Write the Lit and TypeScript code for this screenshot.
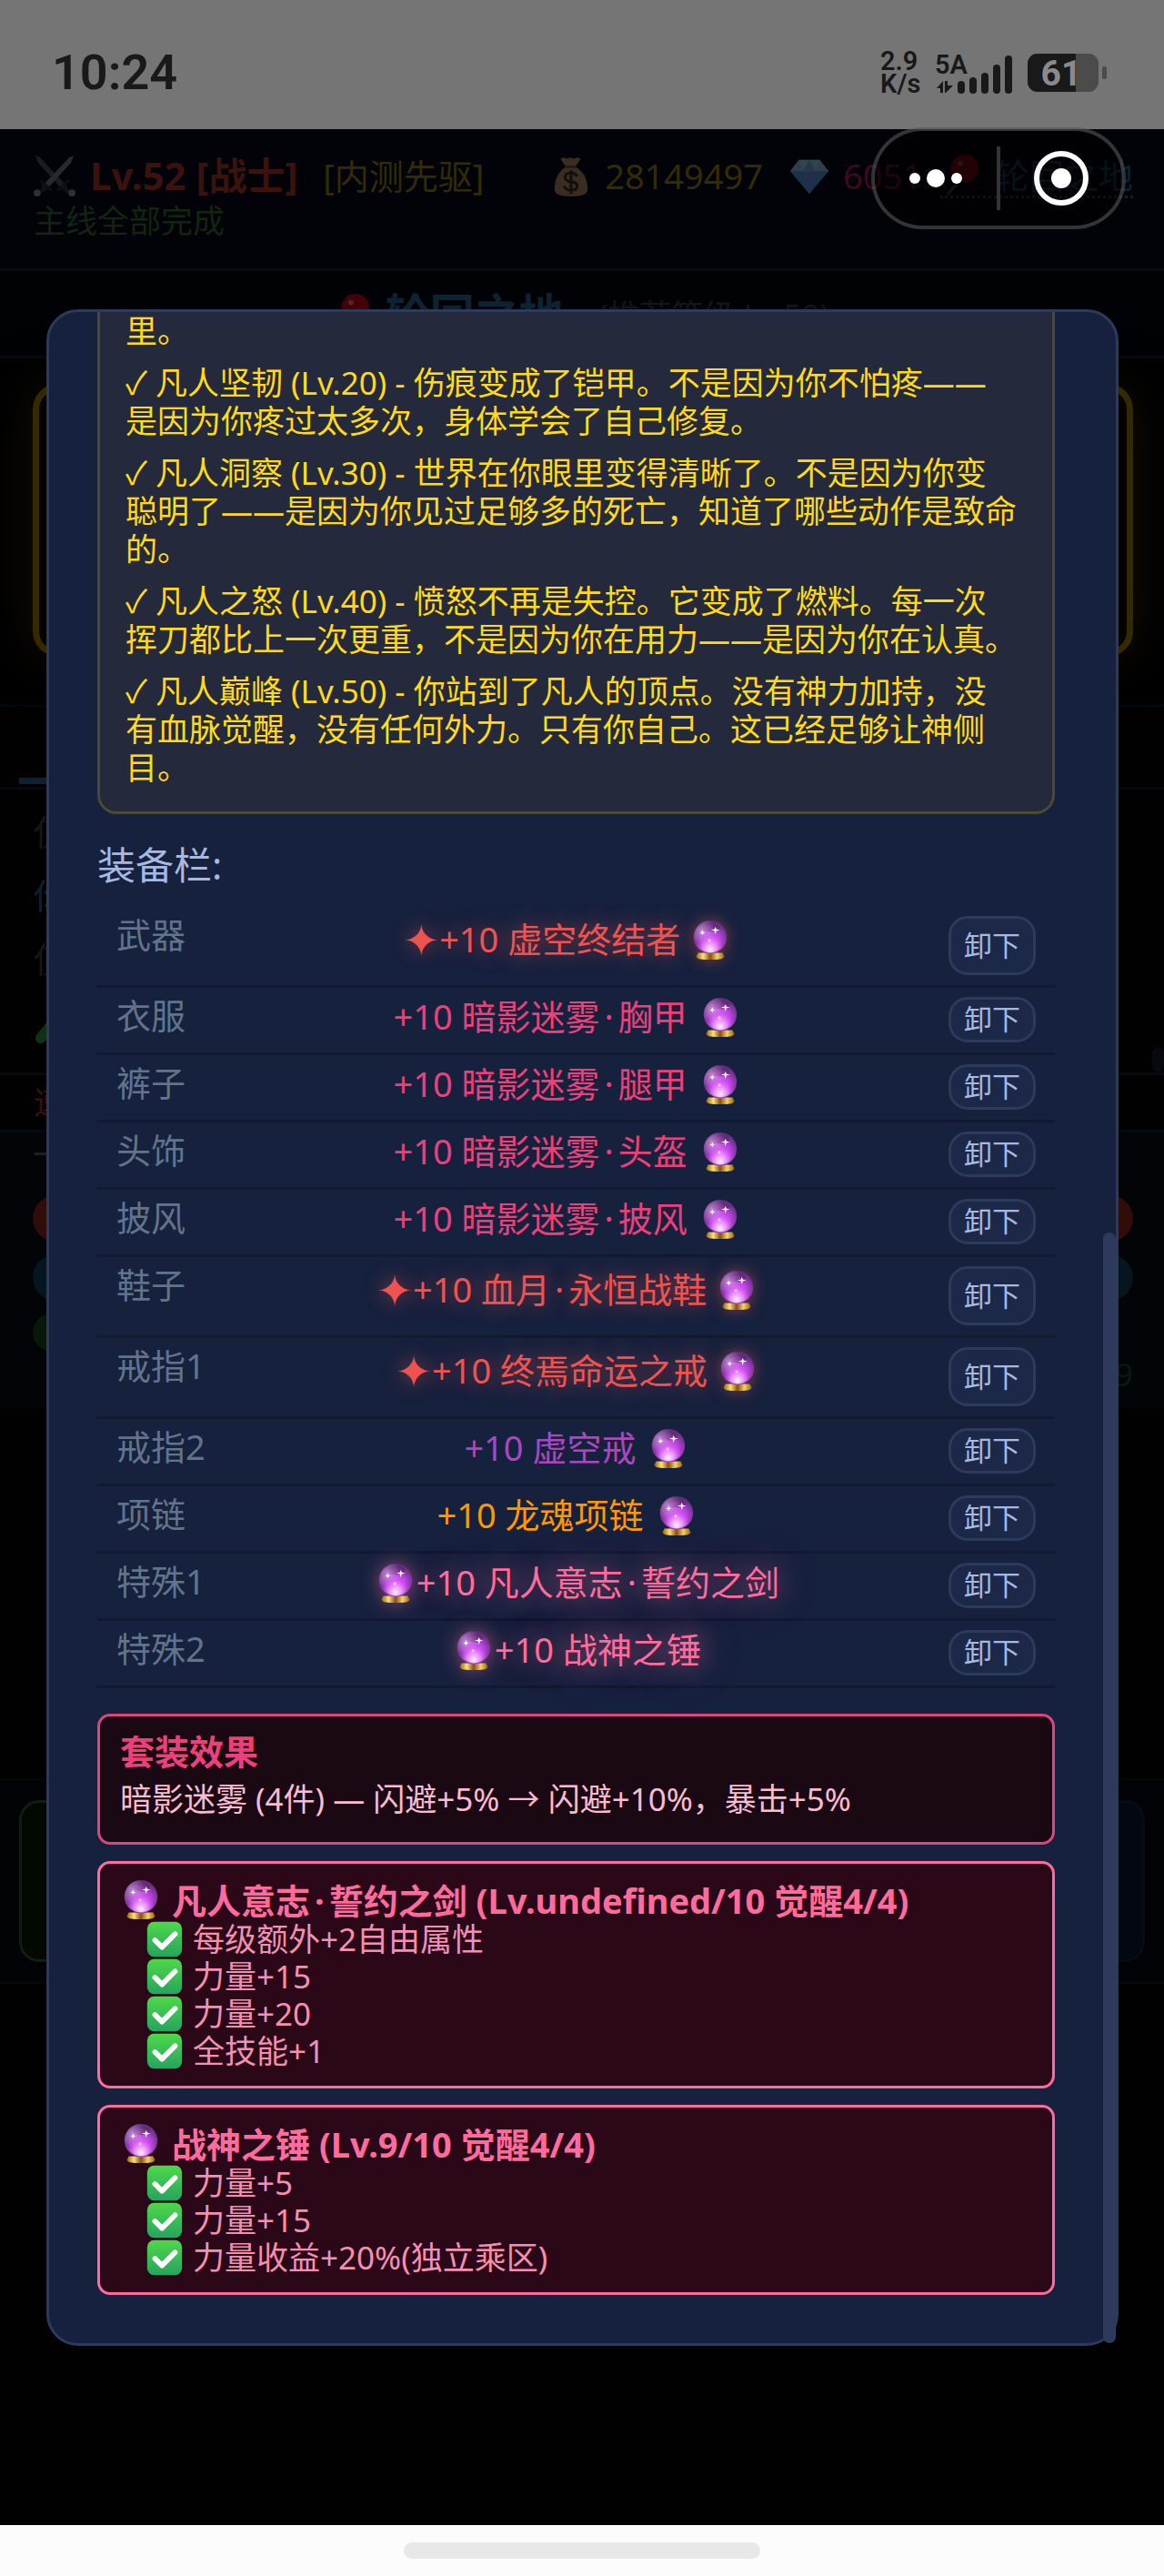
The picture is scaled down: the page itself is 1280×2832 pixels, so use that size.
import { LitElement, html, css, svg } from "lit";
import { customElement, property } from "lit/decorators.js";
import { classMap } from "lit/directives/class-map.js";

type IconName = "orb" | "check" | "swords" | "bag" | "gem" | "pin" | "tube";

const icons = {
  orb: svg`
    <defs>
      <radialGradient id="glass" cx="0.52" cy="0.62" r="0.6">
        <stop offset="0" stop-color="#e65cff"/>
        <stop offset="0.45" stop-color="#c045e6"/>
        <stop offset="0.8" stop-color="#7b3598"/>
        <stop offset="1" stop-color="#5b2a78"/>
      </radialGradient>
      <radialGradient id="shine" cx="0.5" cy="0.9" r="0.45">
        <stop offset="0" stop-color="#fff" stop-opacity="0.95"/>
        <stop offset="0.5" stop-color="#fbb8ff" stop-opacity="0.6"/>
        <stop offset="1" stop-color="#e65cff" stop-opacity="0"/>
      </radialGradient>
      <radialGradient id="haze" cx="0.25" cy="0.3" r="0.4">
        <stop offset="0" stop-color="#d9a6e6" stop-opacity="0.7"/>
        <stop offset="1" stop-color="#d9a6e6" stop-opacity="0"/>
      </radialGradient>
      <linearGradient id="gold" x1="0" x2="1" y1="0" y2="0">
        <stop offset="0" stop-color="#9a6410"/>
        <stop offset="0.25" stop-color="#fbe27a"/>
        <stop offset="0.5" stop-color="#8a4f0c"/>
        <stop offset="0.75" stop-color="#f3d368"/>
        <stop offset="1" stop-color="#9a6410"/>
      </linearGradient>
    </defs>
    <path d="M10 38h28l2 4q0 2-3 3-13 2-26 0-3-1-3-3z" fill="url(#gold)"/>
    <circle cx="24" cy="20" r="19" fill="url(#glass)"/>
    <ellipse cx="25" cy="9" rx="10" ry="5" fill="#5a1f66" opacity="0.55"/>
    <circle cx="24" cy="20" r="19" fill="url(#haze)"/>
    <circle cx="24" cy="20" r="18" fill="url(#shine)"/>
    <path d="M30 8l1 3 4 1-4 1-1 4-1-4-4-1 4-1zM15 12l1 2 2 1-2 1-1 2-1-2-2-1 2-1z" fill="#fff"/>
    <circle cx="23" cy="24" r="1.5" fill="#fce4ff"/>`,
  check: svg`
    <defs>
      <linearGradient id="leaf" x1="0" x2="0" y1="0" y2="1">
        <stop offset="0" stop-color="#4fd849"/>
        <stop offset="1" stop-color="#27a35f"/>
      </linearGradient>
    </defs>
    <rect x="4" y="4" width="40" height="40" rx="8" fill="url(#leaf)"/>
    <path d="M13 25l8 8 15-15" fill="none" stroke="#fff" stroke-width="6" stroke-linecap="round" stroke-linejoin="round"/>`,
  swords: svg`
    <path d="M2 1l5 2 31 33-5 4L5 9z" fill="#54585c"/>
    <path d="M46 1l-5 2L10 36l5 4L43 9z" fill="#7c8084"/>
    <path d="M8 28l14 12-3 2L7 31zM40 28L26 40l3 2 12-11z" fill="#2a2a26"/>
    <path d="M13 35l4 4-10 7-3-3zM35 35l-4 4 10 7 3-3z" fill="#3a2c20"/>
    <circle cx="4" cy="44" r="4" fill="#94999d"/>
    <circle cx="44" cy="44" r="4" fill="#94999d"/>`,
  bag: svg`
    <path d="M15 3q4 3 8 0 4 3 8 0l4 2-6 9q14 8 14 26 0 8-19 8T5 40q0-18 13-26L12 5z" fill="#b88a5a"/>
    <path d="M17 14h13" stroke="#7a4e26" stroke-width="3"/>
    <path d="M31 25q-2-4-7-4-7 0-7 5 0 4 7 5t7 5q0 5-7 5-6 0-8-5M24 18v27" fill="none" stroke="#3c2810" stroke-width="3"/>`,
  gem: svg`
    <path d="M12 6h24l10 13-22 26L2 19z" fill="#4f9fd6"/>
    <path d="M12 6l4 13H2zM36 6l-4 13h14z" fill="#8cc8e8"/>
    <path d="M16 19h16l-8 26z" fill="#6f8fe8"/>
    <path d="M12 6h24l-4 13H16z" fill="#a8dcf0"/>
    <path d="M24 6l-8 13h16z" fill="#7ab4ea"/>`,
  pin: svg`
    <path d="M30 22L8 47" stroke="#6c7176" stroke-width="3"/>
    <circle cx="28" cy="17" r="16" fill="#e3000f"/>
    <circle cx="23" cy="11" r="3" fill="#ff8080"/>`,
  tube: svg`<path d="M8 40L34 8" stroke="#2fa344" stroke-width="12" stroke-linecap="round"/>`,
};

@customElement("game-icon")
export class GameIcon extends LitElement {
  @property() name: IconName = "orb";

  static styles = css`
    :host { display: inline-block; width: 46px; height: 46px; vertical-align: -10px; }
    svg { display: block; width: 100%; height: 100%; }
  `;

  render() {
    return html`<svg viewBox="0 0 48 48" aria-hidden="true">${icons[this.name]}</svg>`;
  }
}

@customElement("phone-status")
export class PhoneStatus extends LitElement {
  static styles = css`
    :host {
      display: flex; justify-content: space-between; align-items: center;
      height: 142px; padding: 18px 62px 0 57px; box-sizing: border-box;
      background: #757575; color: #191919; font-family: Roboto, sans-serif;
    }
    .time { font-size: 54px; font-weight: 600; line-height: 64px; }
    .right { display: flex; align-items: center; }
    .speed { font-size: 29px; line-height: 25px; font-weight: 600; width: 60px; }
    .signal { display: flex; width: 86px; height: 50px; overflow: visible; }
    .battery { display: flex; margin-left: 16px; overflow: visible; }
    svg { display: block; }
    svg text { font-family: Roboto, sans-serif; }
  `;

  render() {
    return html`
      <div class="time">10:24</div>
      <div class="right">
        <div class="speed">2.9<br />K/s</div>
        <svg class="signal" viewBox="0 0 86 50" fill="#191919" aria-hidden="true">
          <text x="0" y="26" font-size="29" font-weight="600">5A</text>
          <path d="M2 42l7-8v13h-3v-5zM11 34h3v5h6l-8 8h-1z"/>
          <rect x="25" y="34" width="8" height="14" rx="4"/>
          <rect x="38" y="30" width="8" height="18" rx="4"/>
          <rect x="51" y="25" width="8" height="23" rx="4"/>
          <rect x="64" y="16" width="8" height="32" rx="4"/>
          <rect x="77" y="6" width="8" height="42" rx="4"/>
        </svg>
        <svg class="battery" width="88" height="42" viewBox="0 0 88 42" role="img" aria-label="61%">
          <defs><clipPath id="cell"><rect width="78" height="42" rx="11"/></clipPath></defs>
          <g clip-path="url(#cell)">
            <rect width="78" height="42" fill="#4b4b4b"/>
            <rect width="53" height="42" fill="#191919"/>
          </g>
          <rect x="82" y="14" width="5" height="14" rx="2" fill="#4b4b4b"/>
          <text x="37" y="35" font-size="39" font-weight="700" fill="#8a8a8a" text-anchor="middle">61</text>
        </svg>
      </div>
    `;
  }
}

@customElement("game-backdrop")
export class GameBackdrop extends LitElement {
  static styles = css`
    :host { display: flex; flex-direction: column; background: #010102; min-width: 0; overflow: hidden; }
    .header { background: #020308; padding: 26px 34px 27px 37px; border-bottom: 3px solid #070a10; white-space: nowrap; }
    .stats { display: flex; align-items: center; font-size: 38px; line-height: 50px; }
    .stats game-icon, .title game-icon { opacity: 0.3; flex: none; }
    .who { display: flex; align-items: center; color: #3b120e; font-size: 42px; font-weight: 700; }
    .who game-icon { margin-right: 16px; }
    .badge { color: #332b03; margin-left: 28px; margin-right: auto; }
    .coins, .gems, .place { display: flex; align-items: center; gap: 14px; }
    .coins { color: #332b03; margin-right: 28px; }
    .gems { color: #3b0a1e; margin-right: 20px; }
    .place { color: #0c2230; border-bottom: 3px dotted #0c2230; line-height: 40px; }
    .quest { color: #112512; font-size: 35px; line-height: 50px; }
    .title {
      display: flex; justify-content: center; align-items: center; gap: 14px; height: 93px;
      padding-right: 4px; border-bottom: 3px solid #060a12; background: #010205; white-space: nowrap;
    }
    .title h2 { margin: 0; font-size: 49px; line-height: 60px; color: #0d2233; }
    .title span { margin-left: 24px; font-size: 35px; color: #131519; }
    .hero { padding: 28px 34px 52px 36px; border-bottom: 3px solid #04070c; }
    .hero div {
      height: 286px; border: 7px solid #332a00; border-radius: 28px;
      box-shadow: 0 0 56px #131002, inset 0 0 28px #0a0800;
    }
    .tabs { display: flex; align-items: flex-end; height: 88px; padding-left: 21px; border-bottom: 3px solid #04070c; }
    .tabs div { width: 240px; height: 7px; margin-bottom: 3px; background: #0c2231; }
    .log { padding: 11px 37px 20px; font-size: 38px; line-height: 70px; color: #151719; }
    .log .own { color: #0c2230; }
    .log div { height: 70px; }
    .log game-icon { opacity: 0.3; }
    .enemy {
      padding: 7px 37px; font-size: 35px; line-height: 46px; color: #341210;
      border-top: 3px solid #060911; border-bottom: 3px solid #060911;
    }
    .bars { display: flex; flex-direction: column; gap: 14px; padding: 0 34px 14px 36px; background: #020407; }
    .dash { height: 55px; font-size: 35px; line-height: 48px; color: #1c1e20; }
    .bar { height: 51px; border-radius: 26px; }
    .hp { background: #300d08; }
    .mp { background: #06161e; }
    .xp { height: 42px; width: 70%; background: #071708; }
    .count { margin-top: -12px; text-align: right; font-size: 35px; line-height: 46px; color: #0a1a09; }
    .actions {
      display: flex; justify-content: space-between; gap: 20px; margin-top: 407px; padding: 21px;
      background: #020307; border-top: 3px solid #05070c; border-bottom: 3px solid #05070c;
    }
    .actions div { flex: 1; height: 172px; border: 3px solid #070c14; border-radius: 22px; background: #020710; }
    .actions .go { border-color: #0d1f0e; background: #030802; }
  `;

  render() {
    return html`
      <div class="header">
        <div class="stats">
          <span class="who"><game-icon name="swords"></game-icon>Lv.52 [战士]</span>
          <span class="badge">[内测先驱]</span>
          <span class="coins"><game-icon name="bag"></game-icon>28149497</span>
          <span class="gems"><game-icon name="gem"></game-icon>6051</span>
          <span class="place"><game-icon name="pin"></game-icon>轮回之地</span>
        </div>
        <div class="quest">主线全部完成</div>
      </div>
      <div class="title">
        <game-icon name="pin"></game-icon>
        <h2>轮回之地</h2>
        <span>(推荐等级 Lv.50)</span>
      </div>
      <div class="hero"><div></div></div>
      <div class="tabs"><div></div></div>
      <div class="log">
        <div>使</div>
        <div class="own">你</div>
        <div>使</div>
        <div><game-icon name="tube"></game-icon></div>
      </div>
      <div class="enemy">速</div>
      <div class="bars">
        <div class="dash">一</div>
        <div class="bar hp"></div>
        <div class="bar mp"></div>
        <div class="bar xp"></div>
        <div class="count">9</div>
      </div>
      <div class="actions">
        <div class="go"></div>
        <div></div>
        <div></div>
      </div>
    `;
  }
}

interface Slot {
  slot: string;
  item: string;
  tier: "red" | "pink" | "purple" | "orange" | "special";
}

const perks = [
  "里。",
  "✓ 凡人坚韧 (Lv.20) - 伤痕变成了铠甲。不是因为你不怕疼——\n是因为你疼过太多次，身体学会了自己修复。",
  "✓ 凡人洞察 (Lv.30) - 世界在你眼里变得清晰了。不是因为你变\n聪明了——是因为你见过足够多的死亡，知道了哪些动作是致命\n的。",
  "✓ 凡人之怒 (Lv.40) - 愤怒不再是失控。它变成了燃料。每一次\n挥刀都比上一次更重，不是因为你在用力——是因为你在认真。",
  "✓ 凡人巅峰 (Lv.50) - 你站到了凡人的顶点。没有神力加持，没\n有血脉觉醒，没有任何外力。只有你自己。这已经足够让神侧\n目。",
];

const slots: Slot[] = [
  { slot: "武器", item: "+10 虚空终结者", tier: "red" },
  { slot: "衣服", item: "+10 暗影迷雾·胸甲", tier: "pink" },
  { slot: "裤子", item: "+10 暗影迷雾·腿甲", tier: "pink" },
  { slot: "头饰", item: "+10 暗影迷雾·头盔", tier: "pink" },
  { slot: "披风", item: "+10 暗影迷雾·披风", tier: "pink" },
  { slot: "鞋子", item: "+10 血月·永恒战鞋", tier: "red" },
  { slot: "戒指1", item: "+10 终焉命运之戒", tier: "red" },
  { slot: "戒指2", item: "+10 虚空戒", tier: "purple" },
  { slot: "项链", item: "+10 龙魂项链", tier: "orange" },
  { slot: "特殊1", item: "+10 凡人意志·誓约之剑", tier: "special" },
  { slot: "特殊2", item: "+10 战神之锤", tier: "special" },
];

const relics = [
  {
    title: "凡人意志·誓约之剑 (Lv.undefined/10 觉醒4/4)",
    effects: ["每级额外+2自由属性", "力量+15", "力量+20", "全技能+1"],
  },
  {
    title: "战神之锤 (Lv.9/10 觉醒4/4)",
    effects: ["力量+5", "力量+15", "力量收益+20%(独立乘区)"],
  },
];

/** Sets air on both sides of the middle dot that joins the parts of a name. */
const dotted = (text: string) =>
  text.split("·").map((part, i) => (i ? html`<span class="dot">·</span>${part}` : part));

@customElement("gear-dialog")
export class GearDialog extends LitElement {
  static styles = css`
    :host {
      display: block; position: relative; box-sizing: border-box;
      padding: 0 67px 53px 53px; border: 3px solid #2d3a5c; border-radius: 35px;
      background: #16213e; color: #a8b8e0;
    }
    .perks {
      padding: 0 28px 27px; border: 3px solid #4c4a36; border-top: 0;
      border-radius: 0 0 21px 21px; background: #242a3b; color: #ffd91a;
      font-size: 35px; line-height: 42px;
    }
    .perks p { margin: 0 0 15px; white-space: pre-line; }
    .perks p:last-child { margin: 0; }
    h3 { margin: 29px 0 19px; font-size: 42px; font-weight: 400; line-height: 54px; }
    ul { list-style: none; margin: 0; padding: 0; }
    .slots li {
      display: flex; justify-content: space-between; box-sizing: border-box; min-height: 74px;
      padding: 10px 21px 11px; border-bottom: 3px solid #111a2e; font-size: 38px; line-height: 42px;
    }
    .slots li.red { min-height: 89px; }
    .label { color: #62738a; line-height: 40px; }
    .item { white-space: nowrap; }
    .dot { padding: 0 5px; }
    .red .item { color: #ef5350; text-shadow: 0 0 21px rgba(239, 83, 80, 0.6); line-height: 50px; }
    .red game-icon { filter: drop-shadow(0 0 8px rgba(239, 83, 80, 0.5)); }
    .star { font-family: "DejaVu Sans", sans-serif; font-size: 48px; line-height: 1; vertical-align: -4px; }
    .pink .item { color: #ec407a; }
    .purple .item { color: #ab47bc; }
    .orange .item { color: #ff9800; }
    .special .item { color: #ff6b9d; text-shadow: 0 0 28px rgba(255, 107, 157, 0.6), 0 0 56px rgba(255, 107, 157, 0.3); }
    .special game-icon { filter: drop-shadow(0 0 10px rgba(255, 107, 157, 0.5)); }
    .pink .after, .purple .after, .orange .after { margin-left: 3px; }
    button {
      padding: 0 14px 2px; border: 3px solid #2d3a5c; border-radius: 21px;
      background: #1c2848; color: #a8b8e0; font: inherit; font-size: 31px; line-height: 36px;
    }
    .card { padding: 18px 22px; border: 3px solid #ff6b9d; border-radius: 14px; margin-top: 18px; background: #2a0817; }
    .card h4 { display: flex; align-items: center; height: 44px; margin: 0; font-size: 38px; line-height: 44px; color: #ff6b9d; }
    .card li { display: flex; align-items: center; height: 41px; font-size: 35px; line-height: 41px; color: #f48fb1; padding-left: 26px; }
    .card li game-icon { margin-right: 8px; }
    .card h4 game-icon { margin-right: 11px; }
    .set { margin-top: 28px; border-color: #dc457d; background: #1a0912; }
    .card.set { padding-bottom: 22px; }
    .card.set h4 { color: #ec407a; height: 40px; }
    .set p { margin: 8px 0 0; font-size: 35px; line-height: 50px; color: #f8bbd0; }
    .thumb {
      position: absolute; right: 0; bottom: 0; width: 14px; height: 1221px;
      border-radius: 7px; background: #2d3a5c;
    }
  `;

  private renderSlot(s: Slot) {
    const isSpecial = s.tier === "special";
    const before = isSpecial
      ? html`<game-icon name="orb"></game-icon>`
      : s.tier === "red"
        ? html`<span class="star">✦</span>`
        : "";
    const after = isSpecial ? "" : html` <game-icon class="after" name="orb"></game-icon>`;
    return html`
      <li class=${classMap({ [s.tier]: true })}>
        <span class="label">${s.slot}</span>
        <span class="item">${before}${dotted(s.item)}${after}</span>
        <button type="button">卸下</button>
      </li>
    `;
  }

  render() {
    return html`
      <div class="perks">${perks.map((p) => html`<p>${p}</p>`)}</div>
      <h3>装备栏:</h3>
      <ul class="slots">${slots.map((s) => this.renderSlot(s))}</ul>
      <div class="card set">
        <h4>套装效果</h4>
        <p>暗影迷雾 (4件) — 闪避+5% → 闪避+10%，暴击+5%</p>
      </div>
      ${relics.map(
        (r) => html`
          <div class="card">
            <h4><game-icon name="orb"></game-icon><span>${dotted(r.title)}</span></h4>
            <ul>${r.effects.map((e) => html`<li><game-icon name="check"></game-icon>${e}</li>`)}</ul>
          </div>
        `,
      )}
      <div class="thumb"></div>
    `;
  }
}

@customElement("app-root")
export class AppRoot extends LitElement {
  static styles = css`
    :host {
      display: flex; flex-direction: column; min-height: 100vh; position: relative;
      background: #010102; font-family: "Noto Sans", "Noto Sans CJK SC", sans-serif;
    }
    .stage { flex: 1; display: grid; }
    game-backdrop, .layer { grid-area: 1 / 1; }
    .layer { padding: 198px 50px 196px 51px; position: relative; }
    .capsule {
      position: absolute; right: 42px; top: 140px; width: 280px; height: 112px; box-sizing: border-box;
      display: flex; align-items: center; border: 4px solid rgba(255, 255, 255, 0.2);
      border-radius: 56px; background: rgba(0, 0, 0, 0.5);
    }
    .capsule button { flex: 1; height: 86px; padding: 0; border: 0; background: none; display: grid; place-items: center; }
    .capsule .divider { width: 4px; height: 70px; background: #333435; }
    .page-thumb { position: absolute; right: 0; top: 1151px; width: 13px; height: 28px; border-radius: 7px; background: #07090f; }
    .home { display: grid; place-items: center; height: 56px; background: #fcfcfc; }
    .home div { width: 392px; height: 18px; border-radius: 9px; background: #e8e8e8; }
  `;

  render() {
    return html`
      <phone-status></phone-status>
      <div class="stage">
        <game-backdrop></game-backdrop>
        <div class="layer"><gear-dialog></gear-dialog></div>
      </div>
      <div class="page-thumb"></div>
      <div class="capsule">
        <button type="button" aria-label="更多">
          <svg width="60" height="22" viewBox="0 0 60 22" fill="#fff">
            <circle cx="7" cy="11" r="6" /><circle cx="30" cy="11" r="10" /><circle cx="53" cy="11" r="6" />
          </svg>
        </button>
        <div class="divider"></div>
        <button type="button" aria-label="关闭">
          <svg width="62" height="62" viewBox="0 0 62 62">
            <circle cx="31" cy="31" r="27" fill="none" stroke="#fff" stroke-width="6" />
            <circle cx="31" cy="31" r="11" fill="#fff" />
          </svg>
        </button>
      </div>
      <div class="home"><div></div></div>
    `;
  }
}
